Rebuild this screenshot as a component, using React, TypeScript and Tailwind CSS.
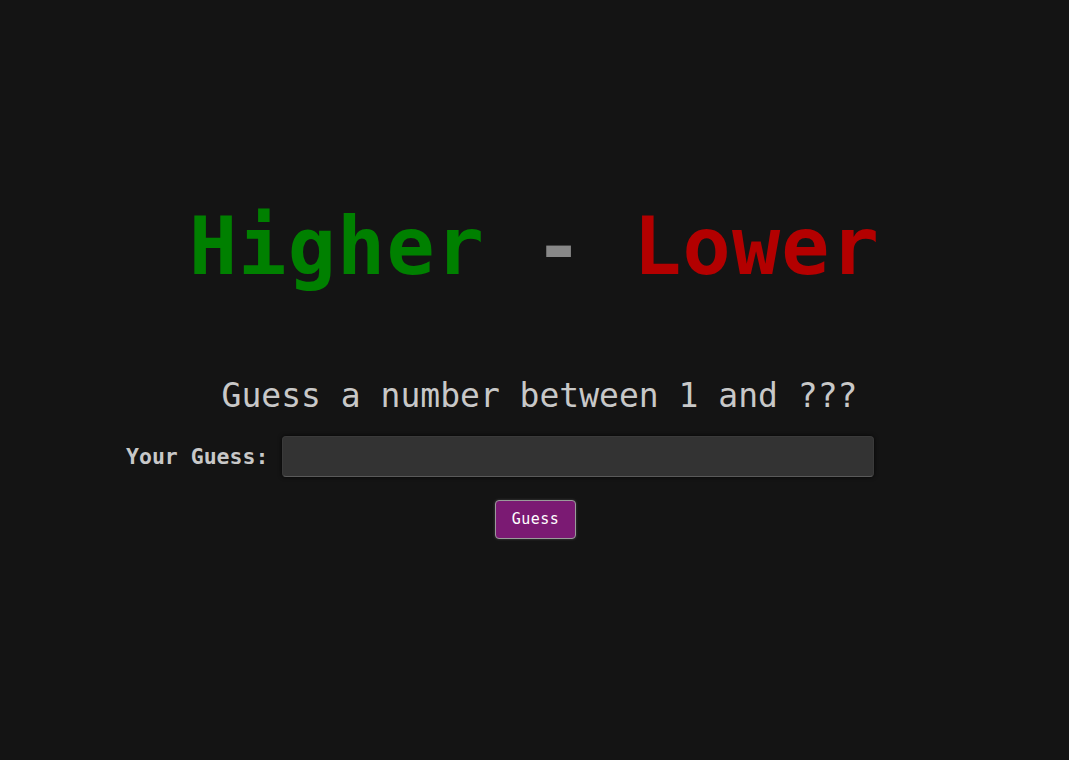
import React from "react";

export default function App() {
  return (
    <div
      className="min-h-[760px] w-full bg-[#141414] flex flex-col"
      style={{ fontFamily: '"DejaVu Sans Mono", monospace' }}
    >
      <h1 className="mt-[207px] text-center text-[80px] font-bold leading-none tracking-[1.2px]">
        <span className="text-[#008000]">Higher</span>
        <span className="text-[#888888]"> - </span>
        <span className="text-[#b30000]">Lower</span>
      </h1>
      <p className="mt-[92px] text-center text-[33px] leading-none text-[#c8c8c8] pl-[10px]">
        Guess a number between 1 and ???
      </p>
      <div className="mt-[24px] flex items-center pl-[126px]">
        <label className="text-[21.5px] font-bold text-[#c8c8c8] leading-none">
          Your Guess:
        </label>
        <input
          type="text"
          className="ml-[14px] h-[41px] w-[592px] rounded-[4px] bg-[#333333] border border-[#3a3a3a] border-b-[#5a5a5a] shadow-[0_0_4px_rgba(0,0,0,0.8)] outline-none"
        />
      </div>
      <div className="mt-[23px] flex justify-center pl-[2px]">
        <button
          className="h-[39px] w-[81px] rounded-[4px] bg-[#7b1a73] border border-[#9a9a9a] text-white text-[15px] leading-none tracking-[0.5px] shadow-[0_0_3px_rgba(255,255,255,0.2)]"
          style={{ fontFamily: '"DejaVu Sans Mono", monospace' }}
        >
          Guess
        </button>
      </div>
    </div>
  );
}
